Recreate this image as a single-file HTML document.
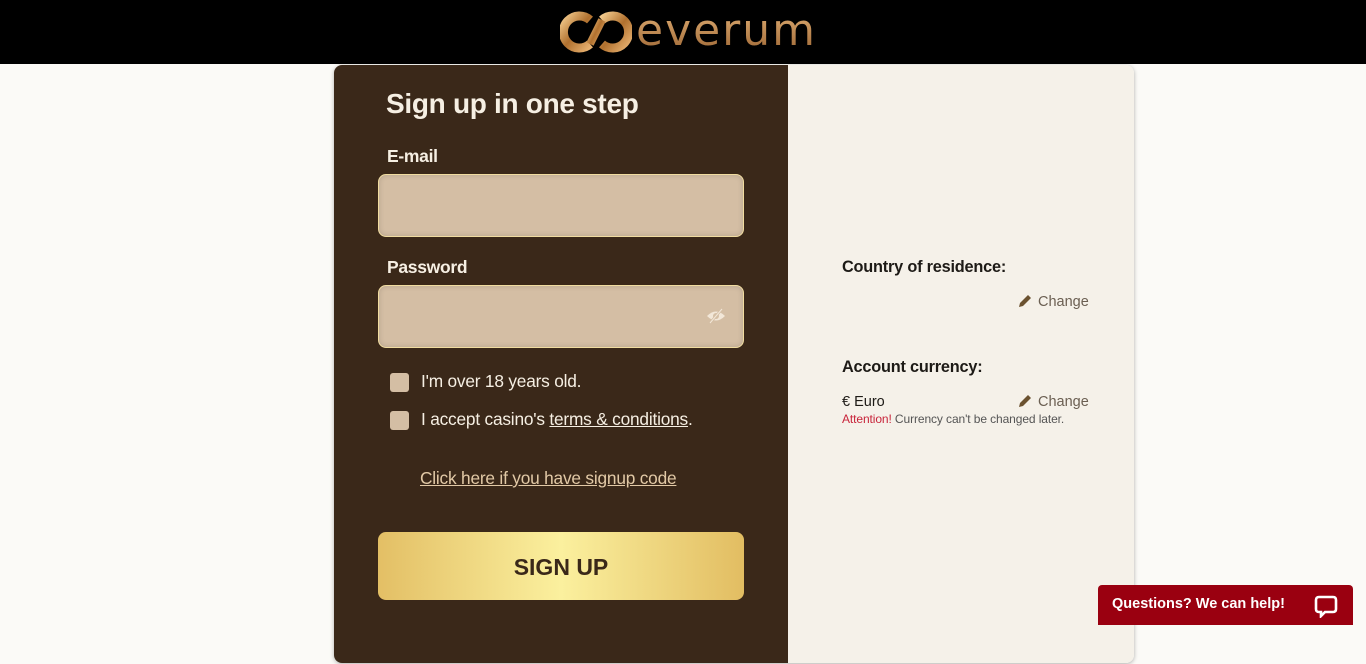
<!DOCTYPE html>
<html><head><meta charset="utf-8"><style>
*{margin:0;padding:0;box-sizing:border-box}
body{width:1366px;height:664px;overflow:hidden;background:#fbfaf7;font-family:"Liberation Sans",Arial,sans-serif;position:relative}
.hdr{position:absolute;left:0;top:0;width:1366px;height:64px;background:#000}
.logo{position:absolute;left:560px;top:8px;width:260px;height:48px}
.logo .t{position:absolute;left:76px;top:-3px;font-size:44px;letter-spacing:2px;font-family:"DejaVu Sans","Liberation Sans",sans-serif;background:linear-gradient(#e6b57a,#9a6331);-webkit-background-clip:text;color:transparent}
.card{position:absolute;left:334px;top:65px;width:800px;height:598px;border-radius:8px;overflow:hidden;box-shadow:0 1px 4px rgba(0,0,0,.3)}
.left{position:absolute;left:0;top:0;width:454px;height:598px;background:#3a2819}
.right{position:absolute;left:454px;top:0;width:346px;height:598px;background:#f5f1e9}
.h1{position:absolute;left:52px;top:23px;color:#f6efe3;font-size:28px;font-weight:bold;letter-spacing:-0.3px}
.lbl{position:absolute;left:53px;color:#f6efe3;font-size:17.5px;font-weight:bold;letter-spacing:-0.3px}
.inp{position:absolute;left:44px;width:366px;height:63px;background:#d4bea4;border:1.5px solid #f0dca0;border-radius:8px;box-shadow:inset 0 0 6px rgba(0,0,0,.15)}
.cb{position:absolute;left:56px;width:19px;height:19px;background:#d4bea4;border-radius:3px}
.ct{position:absolute;left:87px;color:#f6efe3;font-size:17.3px;letter-spacing:-0.2px}
.ct u{text-decoration:underline}
.code{position:absolute;left:86px;top:403px;color:#e2c9a6;font-size:17.3px;letter-spacing:-0.2px;text-decoration:underline}
.btn{position:absolute;left:44px;top:467px;width:366px;height:68px;border-radius:8px;background:linear-gradient(90deg,#e3bf65,#fbf09e 50%,#e2bd62);color:#3a2819;font-size:23px;font-weight:bold;text-align:center;line-height:70px}
.rl{position:absolute;left:54px;color:#1d1a16;font-size:16.3px;font-weight:bold;letter-spacing:-0.2px}
.ch{position:absolute;left:230px;color:#6b5f52;font-size:14.5px}
.ch svg{vertical-align:-2px;margin-right:6px}
.chat{position:absolute;left:1098px;top:585px;width:255px;height:40px;background:#9a0010;border-radius:4px 4px 0 0;color:#fff;font-weight:bold;font-size:15px}
</style></head><body>
<div class="hdr"><div class="logo">
<svg width="72" height="48" viewBox="0 0 72 48"><defs><linearGradient id="g" x1="0" y1="0" x2="1" y2="1"><stop offset="0" stop-color="#f1c88a"/><stop offset=".5" stop-color="#b0702e"/><stop offset="1" stop-color="#e7b170"/></linearGradient></defs>
<path d="M30 12 A16 16 0 1 0 30 36" fill="none" stroke="url(#g)" stroke-width="9"/>
<path d="M42 36 A16 16 0 1 0 42 12" fill="none" stroke="url(#g)" stroke-width="9"/>
<path d="M30 36 L42 12" stroke="url(#g)" stroke-width="8"/></svg>
<div class="t">everum</div></div></div>
<div class="card">
<div class="left">
<div class="h1">Sign up in one step</div>
<div class="lbl" style="top:81px">E-mail</div>
<div class="inp" style="top:109px"></div>
<div class="lbl" style="top:192px">Password</div>
<div class="inp" style="top:220px"><svg style="position:absolute;right:17px;top:21px" width="20" height="18" viewBox="0 0 20 18"><path d="M1 9 Q10 0 19 9 Q10 18 1 9Z" fill="#f2e7d8"/><circle cx="10" cy="9" r="3" fill="#d4bea4"/><path d="M4 16 L16 2" stroke="#d4bea4" stroke-width="2.5"/><path d="M4 16 L16 2" stroke="#f2e7d8" stroke-width="1"/></svg></div>
<div class="cb" style="top:308px"></div><div class="ct" style="top:306px">I'm over 18 years old.</div>
<div class="cb" style="top:346px"></div><div class="ct" style="top:344px">I accept casino's <u>terms &amp; conditions</u>.</div>
<div class="code">Click here if you have signup code</div>
<div class="btn">SIGN UP</div>
</div>
<div class="right">
<div class="rl" style="top:193px">Country of residence:</div>
<div class="ch" style="top:229px"><svg width="14" height="14" viewBox="0 0 14 14"><path d="M1 13 L2 9 L10 1 L13 4 L5 12Z" fill="#6b5230"/></svg>Change</div>
<div class="rl" style="top:293px">Account currency:</div>
<div style="position:absolute;left:54px;top:329px;font-size:14.5px;color:#1d1a16">€ Euro</div>
<div class="ch" style="top:329px"><svg width="14" height="14" viewBox="0 0 14 14"><path d="M1 13 L2 9 L10 1 L13 4 L5 12Z" fill="#6b5230"/></svg>Change</div>
<div style="position:absolute;left:54px;top:347px;font-size:12px;color:#555;letter-spacing:-0.1px"><span style="color:#c8243a">Attention!</span> Currency can't be changed later.</div>
</div></div>
<div class="chat"><span style="position:absolute;left:14px;top:11px;font-size:14.5px">Questions? We can help!</span>
<svg style="position:absolute;left:216px;top:9px" width="24" height="24" viewBox="0 0 24 24"><path d="M5 3 H19 Q22 3 22 6 V15 Q22 18 19 18 H11 L7 22 V18 H5 Q2 18 2 15 V6 Q2 3 5 3Z" fill="none" stroke="#fff" stroke-width="2.6"/></svg></div>
</body></html>
